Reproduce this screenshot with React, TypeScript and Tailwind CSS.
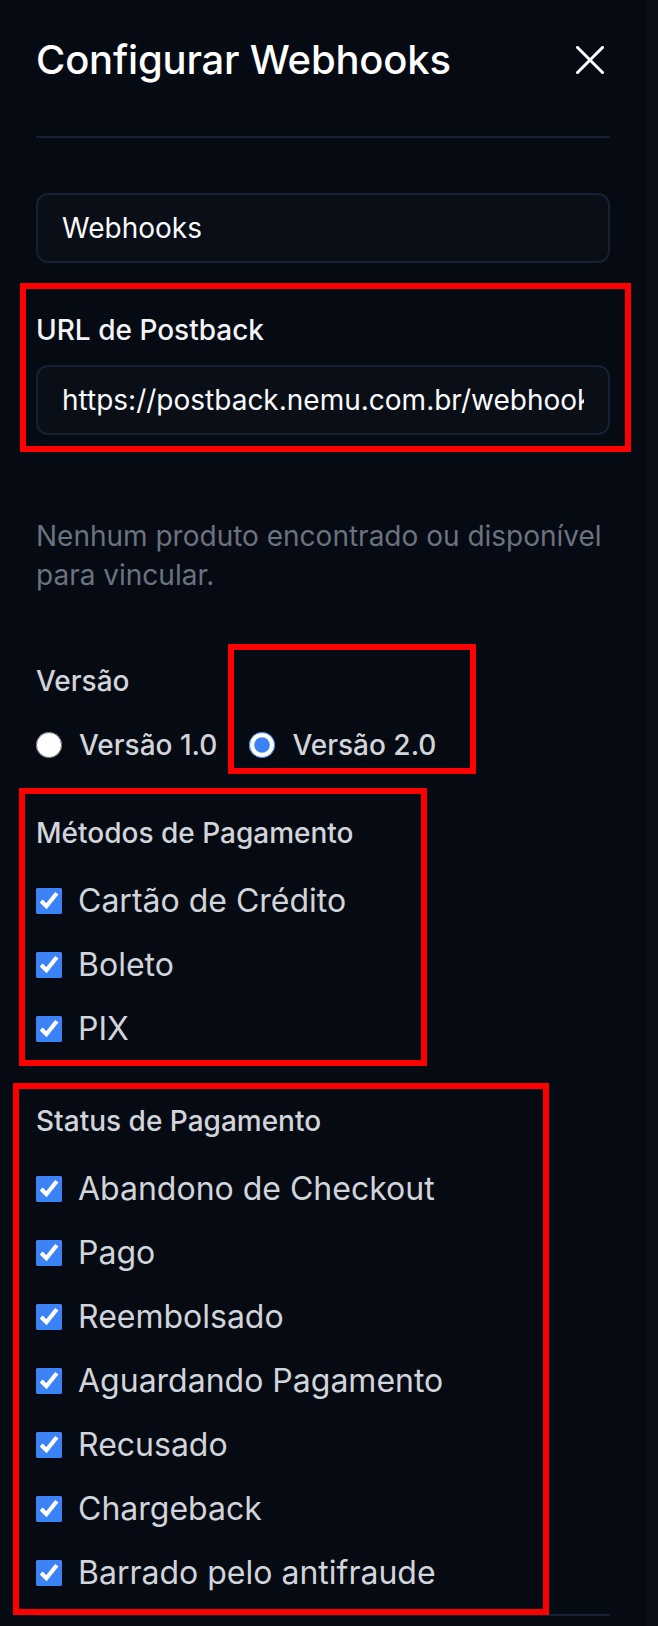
import React from 'react';

const metodos = ['Cartão de Crédito', 'Boleto', 'PIX'];
const status = [
  'Abandono de Checkout',
  'Pago',
  'Reembolsado',
  'Aguardando Pagamento',
  'Recusado',
  'Chargeback',
  'Barrado pelo antifraude',
];

const CheckRow: React.FC<{ label: string }> = ({ label }) => (
  <label className="flex items-center gap-[16px] h-[48px]">
    <input type="checkbox" defaultChecked className="w-[26px] h-[26px] accent-[#3b82f6] shrink-0" />
    <span className="text-[32px] leading-[48px] text-[#d1d5db]">{label}</span>
  </label>
);

const App: React.FC = () => {
  return (
    <div className="w-[658px] min-h-[1626px] bg-[#060a13] flex font-[Inter,sans-serif]">
      <div className="w-[646px] px-[36px] flex flex-col">
        <div className="pt-[32px] pb-[48px] flex items-center justify-between border-b-2 border-[#182033]">
          <h2 className="text-[40px] leading-[56px] font-medium text-white tracking-[-0.2px]">Configurar Webhooks</h2>
          <button className="w-[28px] h-[28px] mr-[6px] text-white">
            <svg viewBox="0 0 28 28" className="w-[28px] h-[28px]" fill="none" stroke="currentColor" strokeWidth="3" strokeLinecap="square">
              <path d="M1.5 1.5 26.5 26.5M26.5 1.5 1.5 26.5" />
            </svg>
          </button>
        </div>

        <div className="pt-[55px] flex flex-col">
          <input
            readOnly
            value="Webhooks"
            className="h-[70px] w-full rounded-[12px] border-2 border-[#172035] bg-[#0a0e17] px-[24px] text-[28px] text-[#f9fafb] outline-none"
          />

          <div className="relative mt-[47px] flex flex-col gap-[15px]">
            <div className="absolute -left-[16px] -right-[21px] -top-[27px] -bottom-[17px] border-[6px] border-[#ff0000] pointer-events-none" />
            <span className="text-[28px] leading-[40px] font-medium text-[#f3f4f6]">URL de Postback</span>
            <input
              readOnly
              value="https://postback.nemu.com.br/webhook/123456"
              className="h-[70px] w-full rounded-[12px] border-2 border-[#172035] bg-[#0a0e17] px-[24px] text-[28px] text-[#f9fafb] outline-none"
            />
          </div>

          <p className="mt-[82px] text-[28px] leading-[39px] text-[#6b7280]">
            Nenhum produto encontrado ou disponível para vincular.
          </p>

          <div className="mt-[66px] flex flex-col gap-[24px]">
            <span className="text-[28px] leading-[40px] font-medium text-[#d1d5db]">Versão</span>
            <div className="flex items-center gap-[32px] h-[40px]">
              <label className="flex items-center gap-[17px]">
                <input type="radio" name="versao" className="w-[26px] h-[26px] accent-[#3b82f6]" />
                <span className="text-[28px] leading-[40px] font-medium text-[#d1d5db]">Versão 1.0</span>
              </label>
              <label className="relative flex items-center gap-[17px]">
                <div className="absolute -left-[21px] -right-[40px] -top-[81px] -bottom-[9px] border-[6px] border-[#ff0000] pointer-events-none" />
                <input type="radio" name="versao" defaultChecked className="w-[26px] h-[26px] accent-[#3b82f6]" />
                <span className="text-[28px] leading-[40px] font-medium text-[#d1d5db]">Versão 2.0</span>
              </label>
            </div>
          </div>

          <div className="relative mt-[48px] flex flex-col">
            <div className="absolute -left-[17px] right-[183px] -top-[25px] -bottom-[13px] border-[6px] border-[#ff0000] pointer-events-none" />
            <span className="text-[28px] leading-[40px] font-medium text-[#d1d5db] mb-[24px]">Métodos de Pagamento</span>
            <div className="flex flex-col gap-[16px]">
              {metodos.map((m) => (
                <CheckRow key={m} label={m} />
              ))}
            </div>
          </div>

          <div className="relative mt-[48px] flex flex-col">
            <div className="absolute -left-[23px] right-[61px] -top-[18px] -bottom-[18px] border-[6px] border-[#ff0000] pointer-events-none" />
            <span className="text-[28px] leading-[40px] font-medium text-[#d1d5db] mb-[24px]">Status de Pagamento</span>
            <div className="flex flex-col gap-[16px]">
              {status.map((s) => (
                <CheckRow key={s} label={s} />
              ))}
            </div>
          </div>

          <div className="mt-[17px] border-t-2 border-[#182033]" />
        </div>
      </div>
      <div className="w-[12px] bg-[#0a0e17]" />
    </div>
  );
};

export default App;
